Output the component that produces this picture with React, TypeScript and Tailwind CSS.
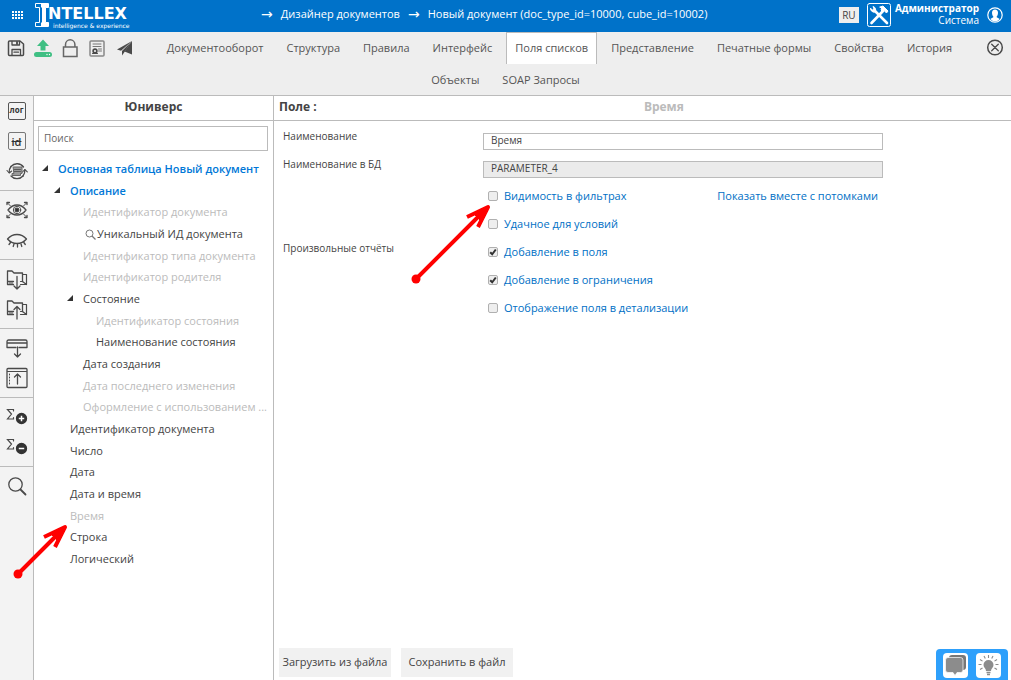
import React, { useState } from 'react';

interface TreeNode {
  label: string;
  level: string;
  tone?: 'title' | 'muted';
  open?: boolean;
  search?: boolean;
}

const tabs = [
  'Документооборот',
  'Структура',
  'Правила',
  'Интерфейс',
  'Поля списков',
  'Представление',
  'Печатные формы',
  'Свойства',
  'История',
];

const extraTabs = ['Объекты', 'SOAP Запросы'];

const tree: TreeNode[] = [
  { label: 'Основная таблица Новый документ', level: 'pl-2', tone: 'title', open: true },
  { label: 'Описание', level: 'pl-5', tone: 'title', open: true },
  { label: 'Идентификатор документа', level: 'pl-[49px]', tone: 'muted' },
  { label: 'Уникальный ИД документа', level: 'pl-[51px]', search: true },
  { label: 'Идентификатор типа документа', level: 'pl-[49px]', tone: 'muted' },
  { label: 'Идентификатор родителя', level: 'pl-[49px]', tone: 'muted' },
  { label: 'Состояние', level: 'pl-[33px]', open: true },
  { label: 'Идентификатор состояния', level: 'pl-[62px]', tone: 'muted' },
  { label: 'Наименование состояния', level: 'pl-[62px]' },
  { label: 'Дата создания', level: 'pl-[49px]' },
  { label: 'Дата последнего изменения', level: 'pl-[49px]', tone: 'muted' },
  { label: 'Оформление с использованием ...', level: 'pl-[49px]', tone: 'muted' },
  { label: 'Идентификатор документа', level: 'pl-9' },
  { label: 'Число', level: 'pl-9' },
  { label: 'Дата', level: 'pl-9' },
  { label: 'Дата и время', level: 'pl-9' },
  { label: 'Время', level: 'pl-9', tone: 'muted' },
  { label: 'Строка', level: 'pl-9' },
  { label: 'Логический', level: 'pl-9' },
];

const Icon: React.FC<{ children: React.ReactNode }> = ({ children }) => (
  <svg width="24" height="24" viewBox="0 0 24 24" fill="none" stroke="#4a4a4a" strokeWidth="1.3" strokeLinecap="round" strokeLinejoin="round" aria-hidden="true">
    {children}
  </svg>
);

const SaveIcon = () => (
  <Icon>
    <path d="M5.5 5H16l3.5 3v10.500a1 1 0 0 1-1 1h-13a1 1 0 0 1-1-1V6a1 1 0 0 1 1-1Z" strokeWidth="1.500" />
    <path d="M8 5.500v3.500h7.500V5.500M8 19v-5.500h8.500V19M10 16.200h4.500" />
    <path d="M13 6v2" strokeWidth="1.800" />
  </Icon>
);

const UploadIcon = () => (
  <svg width="24" height="24" viewBox="0 0 24 24" aria-hidden="true">
    <path d="M12 3.500 18 10h-3.500v4.500h-5V10H6Z" fill="#3fbf83" />
    <rect x="3" y="16" width="18" height="5" rx="2.500" fill="#3fbf83" />
    <circle cx="16" cy="18.500" r="0.700" fill="#fff" />
    <circle cx="18.500" cy="18.500" r="0.700" fill="#fff" />
  </svg>
);

const LockIcon = () => (
  <Icon>
    <path d="M5.500 11h13.500v9.500H5.500ZM7.500 11V8.500a4.700 4.700 0 0 1 9.400 0V11" stroke="#666" strokeWidth="1.500" strokeLinejoin="miter" />
  </Icon>
);

const CertificateIcon = () => (
  <Icon>
    <rect x="5" y="5" width="14" height="15" rx="1" stroke="#888" strokeWidth="1.500" />
    <path d="M8 8h8M8 10.500h8M13.500 13h3M13.500 15h3" stroke="#777" strokeWidth="1" />
    <circle cx="10" cy="15" r="1.900" strokeWidth="1.600" />
    <path d="M7.500 17.500h5" strokeWidth="1" />
  </Icon>
);

const SendIcon = () => (
  <svg width="24" height="24" viewBox="0 0 24 24" fill="#4a4a4a" aria-hidden="true">
    <path d="M20 5 5 13.500l4 1.200Z" />
    <path d="M20 5 10 15v4.500l2.500-3.500Z" />
    <path d="M20 5 12.500 15.500l7.500 3Z" />
  </svg>
);

const CloseIcon = () => (
  <Icon>
    <circle cx="12" cy="11.500" r="7.300" strokeWidth="1.500" />
    <path d="m8.700 8.200 6.600 6.600M15.300 8.200l-6.600 6.600" />
  </Icon>
);

const LogIcon = () => (
  <span className="flex h-[18px] w-[18px] items-center justify-center rounded-xs border border-[#555] pb-[2px] text-[8px] font-bold leading-none text-[#333]">
    лог
  </span>
);

const IdIcon = () => (
  <span className="flex h-[18px] w-[18px] items-center justify-center rounded-xs border border-[#777] text-[11px] font-semibold leading-none text-[#333] line-through">
    id
  </span>
);

const SyncIcon = () => (
  <Icon>
    <path d="M6 7.500a8 8 0 0 1 12.500.5M18 17A8 8 0 0 1 6 17" />
    <path d="M4.200 13.500c-.2-2 .3-4 1.800-6M19.800 11c.2 2-.3 4-1.800 6" />
    <path d="m2 11.500 2.200 2.500L6.700 12M17.500 13l2.300-2.500 2.500 2.300" strokeWidth="1.100" />
    <path d="M8.500 8h8.500v6.500h-1.500v2H7v-2h1.500Z" fill="#999" stroke="#666" strokeWidth="1" />
    <path d="M9.500 10.500h6M9.500 12.500h6" strokeWidth="0.800" />
  </Icon>
);

const EyeFocusIcon = () => (
  <Icon>
    <path d="M3 12c3-4 6-5 9-5s6 1 9 5c-3 4-6 5-9 5s-6-1-9-5Z" />
    <circle cx="12" cy="12" r="3.700" strokeWidth="1" />
    <circle cx="12" cy="12" r="1.800" fill="#333" />
    <path d="m2.500 5 3 3M21.500 5l-3 3M2.500 19l3-3M21.500 19l-3-3" strokeWidth="1" />
    <path d="M2 6.500v-2h2.500M22 6.500v-2h-2.500M2 17.500v2h2.500M22 17.500v2h-2.500" />
  </Icon>
);

const EyeClosedIcon = () => (
  <Icon>
    <path d="M2.500 11c3-3.500 6-4.500 9.500-4.500s6.500 1 9.500 4.500c-3 3.500-6 4.500-9.500 4.500S5.500 14.500 2.500 11Z" />
    <path d="m5.500 14.500-1.500 2M9 16l-.8 2.500M12.500 16.500v2.500M16 16l.8 2.500M18.800 14.500l1.500 2" />
  </Icon>
);

const FolderIcon: React.FC<{ arrow: string }> = ({ arrow }) => (
  <Icon>
    <path d="M8.500 17.500H2.500V4H7l2 2h8.500v8.500M8.500 14.500h-6" />
    <path d="M17.500 7.500h4v10H15.500M15.500 14.500h2l4 3" strokeWidth="1.200" />
    <path d="M4.500 16h4" strokeWidth="1" strokeDasharray="1 1" />
    <path d={arrow} />
  </Icon>
);

const RowDownIcon = () => (
  <Icon>
    <path d="M2 9.500V5.500A1.500 1.500 0 0 1 3.500 4h17A1.500 1.500 0 0 1 22 5.500v6H14M2 9.500v2h9M2.500 7h19" />
    <path d="M12.500 11v10M9.500 18l3 3 3-3" />
  </Icon>
);

const PanelUpIcon = () => (
  <Icon>
    <rect x="2" y="2.500" width="20" height="19" rx="1" />
    <path d="M2.500 5.500h19" strokeWidth="1" />
    <path d="M4.500 8v11" strokeWidth="1" strokeDasharray="1 2" />
    <path d="M12.500 8v10M9.500 11l3-3 3 3" />
  </Icon>
);

const SumIcon: React.FC<{ plus?: boolean }> = ({ plus }) => (
  <Icon>
    <path d="M8.500 6V4.500H2.500l4 4.500-4 5h6V12.500" strokeWidth="1.200" strokeLinejoin="miter" />
    <circle cx="16.500" cy="13.500" r="5" fill="#333" stroke="#333" />
    <path d={plus ? 'M13.800 13.500h5.400M16.500 10.800v5.400' : 'M13.800 13.500h5.400'} stroke="#fff" strokeWidth="1.500" strokeLinecap="butt" />
  </Icon>
);

const SearchIcon = () => (
  <Icon>
    <circle cx="10.500" cy="10.500" r="6.700" strokeWidth="1.300" />
    <path d="m15.500 15.500 5 5" strokeWidth="1.800" />
  </Icon>
);

const toolbar = [
  { label: 'Сохранить', icon: <SaveIcon /> },
  { label: 'Загрузить', icon: <UploadIcon /> },
  { label: 'Блокировка', icon: <LockIcon /> },
  { label: 'Сертификат', icon: <CertificateIcon /> },
  { label: 'Отправить', icon: <SendIcon /> },
];

const sideGroups = [
  [
    { label: 'Лог', icon: <LogIcon /> },
    { label: 'Идентификатор', icon: <IdIcon /> },
    { label: 'Обновить', icon: <SyncIcon /> },
  ],
  [
    { label: 'Показать', icon: <EyeFocusIcon /> },
    { label: 'Скрыть', icon: <EyeClosedIcon /> },
  ],
  [
    { label: 'В папку', icon: <FolderIcon arrow="M12 9.500V22M9 19l3 3 3-3" /> },
    { label: 'Из папки', icon: <FolderIcon arrow="M12 9.500V22M9 12.500l3-3 3 3" /> },
  ],
  [
    { label: 'Вниз', icon: <RowDownIcon /> },
    { label: 'Вверх', icon: <PanelUpIcon /> },
  ],
  [
    { label: 'Добавить сумму', icon: <SumIcon plus /> },
    { label: 'Убрать сумму', icon: <SumIcon /> },
  ],
  [{ label: 'Найти', icon: <SearchIcon /> }],
];

const Logo = () => (
  <a href="#" className="flex h-6 text-white" aria-label="Intellex">
    <svg width="14" height="24" viewBox="0 0 14 24" fill="none" aria-hidden="true">
      <path d="M.5.500h13v4h-3v15h3v4H.5v-4h4v-15h-4Z" stroke="#fff" />
      <path d="M6 1h7.500v3.500h-3v15h3V23H6v-3.500h1v-15H6Z" fill="#fff" />
    </svg>
    <span className="-ml-px flex flex-col pt-[2px]">
      <span className="font-['DejaVu_Sans'] text-[16px] font-bold leading-[18px]">NTELLEX</span>
      <span className="pl-[5px] font-['DejaVu_Sans'] text-[6px] leading-none">intelligence &amp; experience</span>
    </span>
  </a>
);

const Header = () => (
  <header className="flex h-8 items-center bg-[#0072c9] pb-[2px] text-white">
    <button className="mx-3 grid grid-cols-4 gap-px" aria-label="Меню">
      {Array.from({ length: 12 }, (_, i) => (
        <span key={i} className="h-[2px] w-[2px] bg-white" />
      ))}
    </button>
    <Logo />
    <nav className="flex flex-1 items-center justify-center gap-2 pb-[2px] text-[11px] font-medium">
      <span className="font-['DejaVu_Sans'] text-[14px] leading-4">→</span>
      <a href="#">Дизайнер документов</a>
      <span className="font-['DejaVu_Sans'] text-[14px] leading-4">→</span>
      <a href="#">Новый документ (doc_type_id=10000, cube_id=10002)</a>
    </nav>
    <button className="mr-2 h-4 w-5 bg-[#eee] text-[10px] leading-none text-[#444]">RU</button>
    <button aria-label="Инструменты">
      <svg width="24" height="24" viewBox="0 0 24 24" fill="none" stroke="#fff" strokeLinecap="round">
        <rect x="0.500" y="0.500" width="23" height="23" rx="2" strokeWidth="1" />
        <path d="m8 8 12 12" strokeWidth="2.600" />
        <path d="M3.500 5.500A3.500 3.500 0 0 0 8 9a3.500 3.500 0 0 0-2-5.500l1 2.500-1.500 1Z" fill="#fff" strokeWidth="1" />
        <path d="M16 8 4.500 20" strokeWidth="2.600" />
        <path d="m13 4 3-1 5 5-1.500 2-2.500-2.500-2 .5-1-1 .5-1.500Z" fill="#fff" strokeWidth="1" />
      </svg>
    </button>
    <div className="ml-1 mr-2 pb-[2px] text-right text-[10px] leading-3">
      <div className="font-bold">Администратор</div>
      <div>Система</div>
    </div>
    <button className="mr-2" aria-label="Профиль">
      <svg width="16" height="16" viewBox="0 0 16 16" fill="none">
        <circle cx="8" cy="8" r="7.200" stroke="#fff" strokeWidth="1.200" />
        <path d="M8 2.500c2 0 3 1.300 3 3.300S10 9.500 9.500 10c.5 1 2.500 1 3 2-1 1.500-2.500 2.300-4.500 2.300S4.500 13.500 3.500 12c.5-1 2.500-1 3-2C6 9.500 5 7.800 5 5.800s1-3.300 3-3.300Z" fill="#fff" />
      </svg>
    </button>
  </header>
);

const Tab: React.FC<{ label: string; active: boolean; onClick: () => void }> = ({ label, active, onClick }) => (
  <button
    onClick={onClick}
    className={`whitespace-nowrap border border-b-0 px-2 ${active ? 'border-[#bbb] bg-white' : 'border-transparent'}`}
  >
    {label}
  </button>
);

interface CheckProps {
  label: string;
  defaultChecked?: boolean;
}

const Check: React.FC<CheckProps> = ({ label, defaultChecked }) => (
  <label className="flex items-center gap-[6px]">
    <span className="grid h-[10px] w-[10px]">
      <input
        type="checkbox"
        defaultChecked={defaultChecked}
        className="peer col-start-1 row-start-1 h-[10px] w-[10px] appearance-none rounded-xs border border-[#b0b0b0] bg-[#eee]"
      />
      <svg viewBox="0 0 10 10" className="pointer-events-none invisible col-start-1 row-start-1 h-[10px] w-[10px] peer-checked:visible" fill="none" aria-hidden="true">
        <path d="M2.200 5.200 4.200 7.300 7.800 2.500" stroke="#333" strokeWidth="2" />
      </svg>
    </span>
    {label}
  </label>
);

const Arrow: React.FC<{ className: string; size: number }> = ({ className, size }) => (
  <svg className={`pointer-events-none absolute ${className}`} width={size} height={size} fill="none" stroke="#f00" strokeWidth="4" strokeLinejoin="round" aria-hidden="true">
    <circle cx="5" cy={size - 5} r="4.500" fill="#f00" stroke="none" />
    <path d={`M5 ${size - 5} ${size - 6} 6M${size - 25} 14 ${size - 4} 4 ${size - 14} 24`} />
    <path d={`M${size - 4} 4 ${size - 18} 11 ${size - 11} 18Z`} fill="#f00" strokeWidth="1" />
  </svg>
);

const UniversePanel = () => (
  <section className="flex w-60 shrink-0 flex-col border-r border-[#bbb]">
    <h2 className="h-[25px] border-b border-[#bbb] text-center text-[12px] font-bold leading-[22px]">Юниверс</h2>
    <input
      type="search"
      aria-label="Поиск"
      placeholder="Поиск"
      className="ml-1 mr-[5px] mt-[5px] h-[25px] border border-[#bbb] px-[5px] pb-[2px] text-[10px] placeholder:text-[#666]"
    />
    <ul className="mt-[7px] text-[11px]">
      {tree.map((node, i) => (
        <li
          key={i}
          className={`flex h-[22px] items-center whitespace-nowrap nth-[3n]:h-[21px] ${node.level}
            ${node.tone === 'title' ? 'font-semibold text-[#0078d7]' : ''}
            ${node.tone === 'muted' ? 'text-[#bbb]' : ''}
          `}
        >
          {node.open && (
            <svg width="6" height="6" viewBox="0 0 6 6" className="mb-[2px] mr-[10px]" aria-hidden="true">
              <path d="M6 0v6H0Z" fill="#333" />
            </svg>
          )}
          {node.search && (
            <svg width="11" height="11" viewBox="0 0 11 11" className="mr-px" fill="none" stroke="#777" aria-hidden="true">
              <circle cx="4.500" cy="4.500" r="3.500" />
              <path d="m7 7 3.500 3.500" strokeWidth="1.300" />
            </svg>
          )}
          {node.label}
        </li>
      ))}
    </ul>
  </section>
);

const FieldPanel = () => (
  <section className="flex min-w-0 flex-1 flex-col">
    <div className="flex h-[25px] border-b border-[#bbb] pl-[5px] text-[12px] font-bold leading-[22px]">
      <h2>Поле :</h2>
      <span className="flex-1 text-center text-[#bbb]">Время</span>
    </div>

    <form className="relative grid grid-cols-[200px_400px] auto-rows-[28px] items-center pl-[9px] pt-[6px] text-[11px]">
      <label htmlFor="name" className="self-start pt-[2px] text-[10px]">Наименование</label>
      <input id="name" defaultValue="Время" className="h-[17px] w-full border border-[#bbb] px-[7px] pb-[2px] text-[10px]" />

      <label htmlFor="db" className="self-start pt-[2px] text-[10px]">Наименование в БД</label>
      <input id="db" readOnly value="PARAMETER_4" className="h-[17px] w-full border border-[#bbb] bg-[#ebebeb] px-[7px] pb-[2px] text-[10px]" />

      <div className="col-start-2 flex justify-between px-[5px] pb-[2px] text-[#0070c5]">
        <Check label="Видимость в фильтрах" />
        <a href="#">Показать вместе с потомками</a>
      </div>
      <div className="col-start-2 px-[5px] pb-[2px] text-[#0070c5]">
        <Check label="Удачное для условий" />
      </div>

      <span className="self-start pt-[2px] text-[10px]">Произвольные отчёты</span>
      <div className="px-[5px] pb-[2px] text-[#0070c5]">
        <Check label="Добавление в поля" defaultChecked />
      </div>
      <div className="col-start-2 px-[5px] pb-[2px] text-[#0070c5]">
        <Check label="Добавление в ограничения" defaultChecked />
      </div>
      <div className="col-start-2 px-[5px] pb-[2px] text-[#0070c5]">
        <Check label="Отображение поля в детализации" />
      </div>
      <Arrow className="left-[137px] top-[82px]" size={81} />
    </form>

    <div className="mt-auto flex gap-[10px] pb-[3px] pl-[5px] text-[11px]">
      <button className="h-[29px] w-28 bg-[#f1f1f1]">Загрузить из файла</button>
      <button className="h-[29px] w-28 bg-[#f1f1f1]">Сохранить в файл</button>
    </div>
  </section>
);

const ChatWidget = () => (
  <div className="fixed bottom-0 right-[3px] flex gap-2 rounded-t-sm bg-[#2ea0fb] px-[7px] pb-[2px] pt-1">
    <button className="rounded-sm bg-white" aria-label="Чат">
      <svg width="25" height="25" viewBox="0 0 25 25">
        <rect x="6" y="2" width="17" height="15" rx="3" fill="#777" />
        <path d="M5 4.500h12.500A2.500 2.500 0 0 1 20 7v10a2.500 2.500 0 0 1-2.500 2.500H14L12 22.500l-2-3H5A2.500 2.500 0 0 1 2.500 17V7A2.500 2.500 0 0 1 5 4.500Z" fill="#8c8c8c" stroke="#fff" strokeWidth="0.700" />
      </svg>
    </button>
    <button className="rounded-sm bg-white" aria-label="Подсказка">
      <svg width="25" height="25" viewBox="0 0 25 25" fill="#8c8c8c" stroke="#8c8c8c">
        <path d="M12.500 7a5 5 0 0 1 5 5c0 2.500-2.500 3.500-2.500 6h-5c0-2.500-2.500-3.500-2.500-6a5 5 0 0 1 5-5Z" stroke="none" />
        <path d="M10.500 19.500h4M11 21.500h3" strokeWidth="1.500" />
        <path d="M12.500 2v3M8 3l1.300 2.500M17 3l-1.300 2.500M4 6.500l2.500 1.600M21 6.500l-2.500 1.600M2.500 11.500h3M22.500 11.500h-3M4 16.500l2.500-1.500M21 16.500l-2.500-1.500" strokeWidth="1.100" />
      </svg>
    </button>
  </div>
);

const App: React.FC = () => {
  const [active, setActive] = useState('Поля списков');

  return (
    <div className="flex min-h-screen flex-col bg-white font-['Open_Sans',sans-serif] text-[#444]">
      <Header />

      <div className="border-b border-[#bbb] bg-[#eee] text-[11px] text-[#555]">
        <div className="flex h-8">
          <div className="flex items-center gap-[3px] pl-1">
            {toolbar.map((item) => (
              <button key={item.label} aria-label={item.label}>
                {item.icon}
              </button>
            ))}
          </div>
          <nav className="flex flex-1 justify-center gap-[5px]">
            {tabs.map((tab) => (
              <Tab key={tab} label={tab} active={tab === active} onClick={() => setActive(tab)} />
            ))}
          </nav>
          <button className="mr-1" aria-label="Закрыть">
            <CloseIcon />
          </button>
        </div>
        <nav className="flex h-[31px] justify-center gap-[5px]">
          {extraTabs.map((tab) => (
            <Tab key={tab} label={tab} active={tab === active} onClick={() => setActive(tab)} />
          ))}
        </nav>
      </div>

      <div className="relative flex flex-1">
        <aside className="w-[34px] shrink-0 border-r border-[#bbb] bg-[#f3f3f3]">
          {sideGroups.map((group, i) => (
            <div key={i} className="border-b border-[#bbb] py-1 first:pt-0 last:border-b-0">
              {group.map((item) => (
                <button key={item.label} aria-label={item.label} className="flex h-[30px] w-full items-center justify-center">
                  {item.icon}
                </button>
              ))}
            </div>
          ))}
        </aside>
        <UniversePanel />
        <FieldPanel />
        <Arrow className="left-[13px] top-[427px]" size={56} />
      </div>

      <ChatWidget />
    </div>
  );
};

export default App;
